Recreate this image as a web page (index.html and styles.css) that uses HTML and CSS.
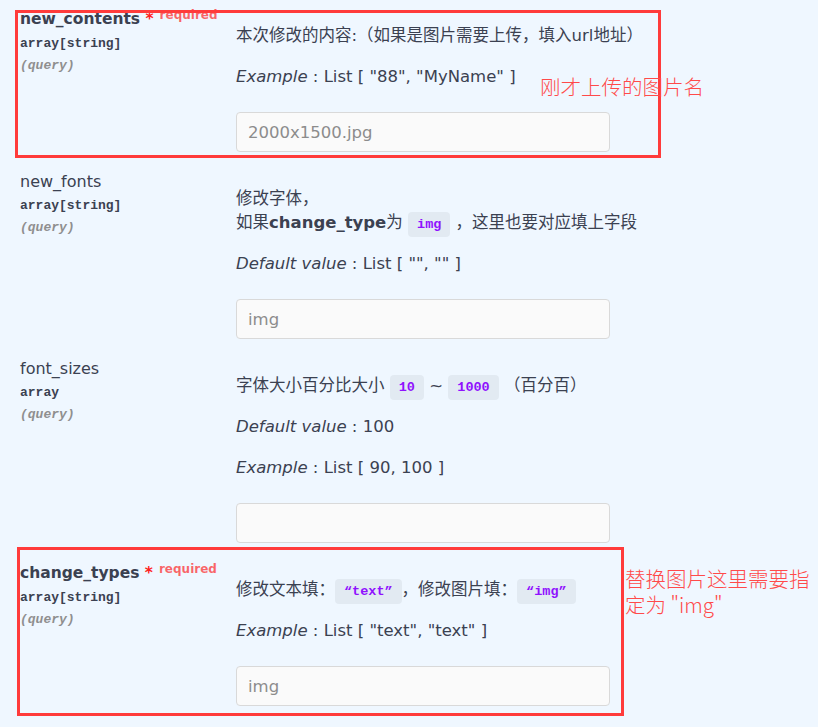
FILE: index.html
```html
<!DOCTYPE html>
<html lang="zh">
<head>
<meta charset="utf-8">
<title>Parameters</title>
<link rel="stylesheet" href="styles.css">
</head>
<body>
<div class="page">
  <div class="params">
    <div class="row">
      <div class="col-name">
        <div class="pname required">new_contents<span class="star">&nbsp;*</span><span class="req">required</span></div>
        <div class="ptype">array[string]</div>
        <div class="pin">(query)</div>
      </div>
      <div class="col-desc">
        <p>本次修改的内容:（如果是图片需要上传，填入url地址）</p>
        <p><i>Example</i> : List [ "88", "MyName" ]</p>
        <input class="field" type="text" placeholder="2000x1500.jpg">
      </div>
    </div>

    <div class="row">
      <div class="col-name">
        <div class="pname">new_fonts</div>
        <div class="ptype">array[string]</div>
        <div class="pin">(query)</div>
      </div>
      <div class="col-desc">
        <p>修改字体，<br>如果<b>change_type</b>为 <code>img</code> ，这里也要对应填上字段</p>
        <p><i>Default value</i> : List [ "", "" ]</p>
        <input class="field" type="text" placeholder="img">
      </div>
    </div>

    <div class="row">
      <div class="col-name">
        <div class="pname">font_sizes</div>
        <div class="ptype">array</div>
        <div class="pin">(query)</div>
      </div>
      <div class="col-desc">
        <p>字体大小百分比大小 <code>10</code> ~ <code>1000</code> （百分百）</p>
        <p><i>Default value</i> : 100</p>
        <p><i>Example</i> : List [ 90, 100 ]</p>
        <input class="field" type="text">
      </div>
    </div>

    <div class="row">
      <div class="col-name">
        <div class="pname required">change_types<span class="star">&nbsp;*</span><span class="req">required</span></div>
        <div class="ptype">array[string]</div>
        <div class="pin">(query)</div>
      </div>
      <div class="col-desc">
        <p>修改文本填：<code>“text”</code>，修改图片填：<code>“img”</code></p>
        <p><i>Example</i> : List [ "text", "text" ]</p>
        <input class="field" type="text" placeholder="img">
      </div>
    </div>
  </div>

  <div class="mark mark-1"></div>
  <div class="mark mark-2"></div>
  <div class="note note-1">刚才上传的图片名</div>
  <div class="note note-2">替换图片这里需要指<br>定为 "img"</div>
</div>
</body>
</html>
```

FILE: styles.css
```css
* { box-sizing: border-box; }

html, body {
  margin: 0;
  padding: 0;
  background: #eff7ff;
}

body {
  font-family: "DejaVu Sans", "Noto Sans CJK SC", sans-serif;
  color: #3b4151;
  font-size: 16.5px;
}

.page {
  position: relative;
  width: 818px;
  height: 727px;
  overflow: hidden;
}

.params {
  margin-top: -1px;
  padding-left: 20px;
}

.row {
  display: flex;
  padding: 10px 0;
}

.col-name {
  width: 216px;
  flex: none;
}

.pname {
  font-size: 16px;
  line-height: 20px;
  white-space: nowrap;
}

.pname.required {
  font-weight: 700;
  font-size: 15.5px;
}

.star {
  color: #ff2020;
}

.req {
  position: relative;
  top: -5px;
  padding-left: 6px;
  font-size: 12px;
  font-weight: 700;
  color: rgba(255, 0, 0, 0.6);
}

.ptype {
  font-family: "Liberation Mono", monospace;
  font-size: 13px;
  font-weight: 700;
  line-height: 18px;
  padding: 5px 0;
}

.pin {
  font-family: "Liberation Mono", monospace;
  font-size: 13px;
  font-style: italic;
  font-weight: 700;
  line-height: 16px;
  color: #8f8f8f;
}

.col-desc {
  flex: 1;
  padding-top: 15px;
}

.col-desc p {
  margin: 0 0 17px;
  line-height: 24px;
  white-space: nowrap;
}

.col-desc b {
  font-weight: 700;
}

code {
  font-family: "Liberation Mono", monospace;
  font-size: 13.5px;
  font-weight: 700;
  line-height: 1;
  color: #9012fe;
  background: rgba(0, 0, 0, 0.05);
  border-radius: 4px;
  padding: 5px 9px;
}

.field {
  display: block;
  margin-top: 23px;
  width: 374px;
  height: 40px;
  padding: 8px 11px;
  background: #fafafa;
  border: 1px solid #d9d9d9;
  border-radius: 4px;
  font-family: "DejaVu Sans", "Noto Sans CJK SC", sans-serif;
  font-size: 16.5px;
  color: #3b4151;
  outline: none;
}

.field::placeholder {
  color: #8c8c8c;
}

.mark {
  position: absolute;
  border: 3px solid #ff3b3b;
  pointer-events: none;
}

.mark-1 {
  left: 15px;
  top: 10px;
  width: 646px;
  height: 148px;
}

.mark-2 {
  left: 17px;
  top: 547px;
  width: 607px;
  height: 169px;
}

.note {
  position: absolute;
  font-family: "Noto Sans CJK SC", sans-serif;
  font-weight: 300;
  font-size: 20.5px;
  line-height: 26px;
  color: #ff4a4a;
  white-space: nowrap;
}

.note-1 {
  left: 540px;
  top: 73px;
}

.note-2 {
  left: 625px;
  top: 565px;
}
```
